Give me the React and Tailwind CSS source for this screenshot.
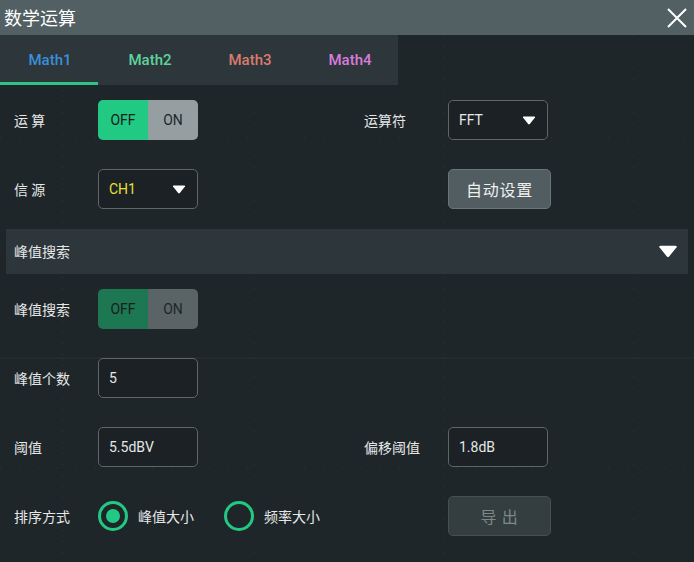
const cjk = { fontFamily: '"Noto Sans CJK SC", "Noto Sans", sans-serif' }
const latin = { fontFamily: 'Roboto, "Noto Sans CJK SC", sans-serif' }

const tabs = [
    { name: 'Math1', color: 'text-[#3b8fd8]', active: true },
    { name: 'Math2', color: 'text-[#5fd39b]' },
    { name: 'Math3', color: 'text-[#da7b6d]' },
    { name: 'Math4', color: 'text-[#d97bdc]' },
]

const Caret = ({ className = '' }) => (
    <svg width="14" height="9" viewBox="0 0 14 9" className={className}>
        <path d="M1 1.5 Q0.5 0.5 2 0.5 H12 Q13.5 0.5 13 1.5 L7.8 8 Q7 8.8 6.2 8 Z" fill="#fff" />
    </svg>
)

const Label = ({ children }) => (
    <div className="w-[84px] text-[14px] text-[#e6e8e8]" style={cjk}>{children}</div>
)

const Toggle = ({ dim }) => (
    <div className="flex w-[100px] h-[40px] rounded-[5px] overflow-hidden text-[14px]" style={latin}>
        <div className={`flex-1 flex items-center justify-center ${dim ? 'bg-[#1e7753] text-[#142019]' : 'bg-[#21c983] text-[#142019]'}`}>OFF</div>
        <div className={`flex-1 flex items-center justify-center ${dim ? 'bg-[#5a6466] text-[#1e2628]' : 'bg-[#959fa1] text-[#1e2628]'}`}>ON</div>
    </div>
)

const Select = ({ value, yellow }) => (
    <div className="flex items-center justify-between w-[100px] h-[40px] rounded-[5px] border border-[#5d6668] bg-[#1b2124] pl-[10px] pr-[11px]">
        <span className={`text-[14px] ${yellow ? 'text-[#e5e03a]' : 'text-[#e6e8e8]'}`} style={latin}>{value}</span>
        <Caret />
    </div>
)

const Field = ({ value }) => (
    <div className="flex items-center w-[100px] h-[40px] rounded-[5px] border border-[#5d6668] bg-[#1b2124] pl-[10px]">
        <span className="text-[14px] text-[#e6e8e8]" style={latin}>{value}</span>
    </div>
)

const Button = ({ children, disabled }) => (
    <div
        className={`flex items-center justify-center w-[103px] h-[40px] rounded-[5px] border text-[16px] tracking-wider ${disabled ? 'bg-[#343e40] border-[#465052] text-[#7d8789]' : 'bg-[#515d60] border-[#6a7577] text-[#eef0f0]'}`}
        style={cjk}
    >
        {children}
    </div>
)

const Radio = ({ checked, label }) => (
    <div className="flex items-center gap-[10px]">
        <div className="w-[30px] h-[30px] rounded-full border-[3px] border-[#21c983] flex items-center justify-center">
            {checked && <div className="w-[14px] h-[14px] rounded-full bg-[#21c983]" />}
        </div>
        <span className="text-[14px] text-[#e6e8e8]" style={cjk}>{label}</span>
    </div>
)

const Row = ({ left, right, className = '' }) => (
    <div className={`flex items-center h-[40px] pl-[14px] ${className}`}>
        <div className="flex items-center w-[350px]">{left}</div>
        <div className="flex items-center">{right}</div>
    </div>
)

// faint scope graticule behind the dialog
const Grid = () => {
    const xs = [63, 254, 444, 634]
    const ys = [138, 248, 468]
    return (
        <svg className="absolute inset-0 pointer-events-none" width="694" height="527">
            {xs.map(x => (
                <line key={x} x1={x} y1="0" x2={x} y2="527" stroke="#2d373b" strokeWidth="1" strokeDasharray="1 10" />
            ))}
            {ys.map(y => (
                <line key={y} x1="0" y1={y - 35} x2="694" y2={y - 35} stroke="#2d373b" strokeWidth="1" strokeDasharray="1 18" />
            ))}
            <line x1="0" y1="323" x2="694" y2="323" stroke="#283135" strokeWidth="1" />
        </svg>
    )
}

export default function App() {
    return (
        <div className="w-[694px] h-[562px] bg-[#1f2629] flex flex-col overflow-hidden">
            <div className="h-[35px] bg-[#525f63] flex items-center justify-between pl-[4px] pr-[6px] shrink-0">
                <span className="text-[18px] text-white" style={cjk}>数学运算</span>
                <svg width="22" height="22" viewBox="0 0 22 22">
                    <path d="M2 2 L20 20 M20 2 L2 20" stroke="#fff" strokeWidth="2" />
                </svg>
            </div>

            <div className="relative flex-1">
                <Grid />
                <div className="relative flex flex-col">
                    <div className="flex w-[398px] h-[50px] bg-[#2c363b] overflow-hidden">
                        {tabs.map(t => (
                            <div key={t.name} className="relative w-[100px] shrink-0 flex items-center justify-center">
                                <span className={`text-[15px] font-medium ${t.color}`} style={latin}>{t.name}</span>
                                {t.active && <div className="absolute left-0 right-[2px] bottom-0 h-[3px] bg-[#2ec486]" />}
                            </div>
                        ))}
                    </div>

                    <Row
                        className="mt-[15px]"
                        left={<><Label>运 算</Label><Toggle /></>}
                        right={<><Label>运算符</Label><Select value="FFT" /></>}
                    />
                    <Row
                        className="mt-[29px]"
                        left={<><Label>信 源</Label><Select value="CH1" yellow /></>}
                        right={<><div className="w-[84px]" /><Button>自动设置</Button></>}
                    />

                    <div className="mt-[20px] mx-[6px] h-[45px] bg-[#2c363b] flex items-center justify-between pl-[8px] pr-[10px]">
                        <span className="text-[14px] text-[#e6e8e8]" style={cjk}>峰值搜索</span>
                        <Caret className="w-[20px] h-[13px]" />
                    </div>

                    <Row
                        className="mt-[15px]"
                        left={<><Label>峰值搜索</Label><Toggle dim /></>}
                    />
                    <Row
                        className="mt-[29px]"
                        left={<><Label>峰值个数</Label><Field value="5" /></>}
                    />
                    <Row
                        className="mt-[29px]"
                        left={<><Label>阈值</Label><Field value="5.5dBV" /></>}
                        right={<><Label>偏移阈值</Label><Field value="1.8dB" /></>}
                    />
                    <Row
                        className="mt-[29px]"
                        left={<><Label>排序方式</Label><div className="flex items-center gap-[30px]"><Radio checked label="峰值大小" /><Radio label="频率大小" /></div></>}
                        right={<><div className="w-[84px]" /><Button disabled>导 出</Button></>}
                    />
                </div>
            </div>
        </div>
    )
}
